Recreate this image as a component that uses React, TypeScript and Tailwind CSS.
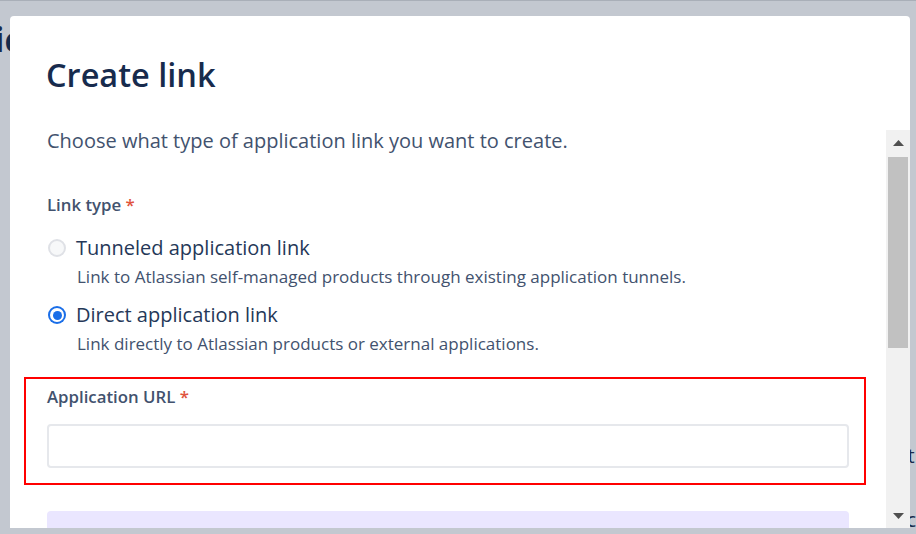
import { ReactNode } from 'react'

const font = { fontFamily: '"Open Sans", "Noto Sans", sans-serif' }

function Radio({ checked }: { checked?: boolean }) {
  if (checked) {
    return (
      <span className="flex h-[18px] w-[18px] shrink-0 items-center justify-center rounded-full bg-[#1a6ee8]">
        <span className="flex h-[14px] w-[14px] items-center justify-center rounded-full bg-white">
          <span className="h-[9px] w-[9px] rounded-full bg-[#1a6ee8]" />
        </span>
      </span>
    )
  }
  return <span className="h-[18px] w-[18px] shrink-0 rounded-full border-2 border-[#dfe1e6] bg-[#f7f8f9]" />
}

function Option({ checked, label, hint, className }: { checked?: boolean; label: string; hint: string; className?: string }) {
  return (
    <div className={className}>
      <div className="flex h-[28px] items-center gap-[10px] pl-[1px]">
        <Radio checked={checked} />
        <span className="text-[20px] leading-[28px] text-[#253858]">{label}</span>
      </div>
      <div className="mt-[5px] pl-[30px] text-[17px] leading-[20px] text-[#42526e]">{hint}</div>
    </div>
  )
}

function Label({ children }: { children: ReactNode }) {
  return (
    <div className="text-[16.8px] font-semibold leading-[20px] text-[#42526e]">
      {children} <span className="text-[#e0533d]">*</span>
    </div>
  )
}

function Arrow({ down }: { down?: boolean }) {
  return (
    <div className="flex h-[25px] items-center justify-center">
      <svg width="11" height="6" viewBox="0 0 11 6">
        <path d={down ? 'M0 0 H11 L5.5 6 Z' : 'M0 6 H11 L5.5 0 Z'} fill="#505050" />
      </svg>
    </div>
  )
}

function Scrollbar() {
  return (
    <div className="flex w-[24px] shrink-0 flex-col bg-[#f1f1f1]">
      <Arrow />
      <div className="mx-[2px] mt-[2px] h-[191px] bg-[#c1c1c1]" />
      <div className="flex-1" />
      <Arrow down />
    </div>
  )
}

export default function App() {
  return (
    <div className="relative h-[534px] w-[916px] overflow-hidden border-t border-[#a9afb8] bg-[#c3c8d0]" style={font}>
      <div className="flex h-full justify-between">
        <div className="ml-[-6px] mt-[18px] text-[34px] font-bold leading-[40px] text-[#172b4d]">ic</div>
        <div className="flex flex-col pt-[444px] text-[20px] leading-[22px] text-[#172b4d]">
          <span className="ml-[-2px]">t</span>
          <span className="ml-[-3px] mt-[42px]">c</span>
        </div>
      </div>

      <div className="absolute left-[10px] top-[15px] flex h-[512px] w-[900px] flex-col overflow-hidden rounded-t-[4px] bg-white">
        <div className="h-[114px] shrink-0 pl-[36px] pt-[39px]">
          <h1 className="text-[32.5px] font-semibold leading-[40px] text-[#172b4d]">Create link</h1>
        </div>
        <div className="flex min-h-0 flex-1">
          <div className="min-w-0 flex-1 px-[37px] pt-[1px]">
            <p className="text-[20px] leading-[20px] text-[#42526e]">
              Choose what type of application link you want to create.
            </p>
            <div className="mt-[44px]">
              <Label>Link type</Label>
            </div>
            <Option
              className="mt-[19px]"
              label="Tunneled application link"
              hint="Link to Atlassian self-managed products through existing application tunnels."
            />
            <Option
              className="mt-[14px]"
              checked
              label="Direct application link"
              hint="Link directly to Atlassian products or external applications."
            />
            <div className="ml-[-23px] mr-[-17px] mt-[23px] border-2 border-[#ff0000] pb-[15px] pl-[21px] pr-[15px] pt-[8px]">
              <Label>Application URL</Label>
              <input className="mt-[17px] block h-[44px] w-full rounded-[4px] border-2 border-[#e6e8ec] bg-white outline-none" />
            </div>
            <div className="mt-[26px] h-[60px] rounded-[4px] bg-[#eae6ff]" />
          </div>
          <Scrollbar />
        </div>
      </div>
    </div>
  )
}
